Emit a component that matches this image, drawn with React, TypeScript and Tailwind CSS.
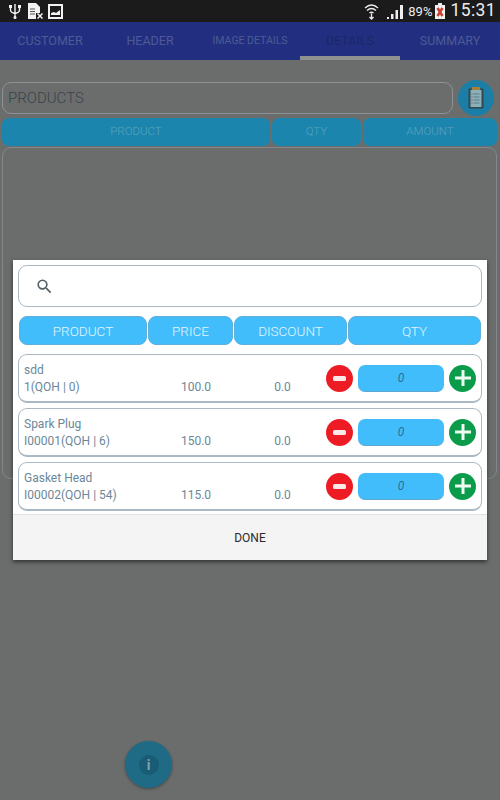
import { MdSearch } from 'react-icons/md'

const tabs = [
  { label: 'CUSTOMER', cls: 'text-[12.5px] text-[#4d5a96]' },
  { label: 'HEADER', cls: 'text-[12.5px] text-[#4d5a96]' },
  { label: 'IMAGE DETAILS', cls: 'text-[10.5px] text-[#4d5a96]' },
  { label: 'DETAILS', cls: 'text-[12.5px] text-[#1c2668] shadow-[inset_0_-4px_0_#8f9090]' },
  { label: 'SUMMARY', cls: 'text-[12.5px] text-[#4d5a96]' },
]

const products = [
  { name: 'sdd', code: '1(QOH | 0)', price: '100.0' },
  { name: 'Spark Plug', code: 'I00001(QOH | 6)', price: '150.0' },
  { name: 'Gasket Head', code: 'I00002(QOH | 54)', price: '115.0' },
]

function StatusBar() {
  return (
    <div className="h-[22px] bg-[#1b1b1b] flex items-center pl-[9px] pr-[4px] text-[#ececec]">
      <svg width="12" height="16" viewBox="0 0 12 16" fill="none" stroke="#f2f2f2" strokeWidth="1.4">
        <path d="M6 1v14M1.500 4v3q0 2.500 4.500 3.500q4.500-1 4.500-3.500V4" />
        <rect x="0" y="2" width="3" height="3" fill="#f2f2f2" stroke="none" />
        <rect x="9" y="2" width="3" height="3" fill="#f2f2f2" stroke="none" />
        <circle cx="6" cy="14.500" r="1.500" fill="#f2f2f2" stroke="none" />
      </svg>
      <svg className="ml-[7px]" width="15" height="16" viewBox="0 0 15 16">
        <path d="M0 0h8l4 4v6H8v6H0z" fill="#f2f2f2" />
        <path d="M2 6h5M2 8.500h5M2 11h5" stroke="#555" strokeWidth="1" />
        <path d="M9.500 10.500l5 5M14.500 10.500l-5 5" stroke="#f2f2f2" strokeWidth="1.500" />
      </svg>
      <svg className="ml-[5px]" width="15" height="15" viewBox="0 0 15 15">
        <rect x="1" y="1" width="13" height="13" fill="#1b1b1b" stroke="#f2f2f2" strokeWidth="2" />
        <path d="M3 11V9l3-1 2 1 4-3v5z" fill="#f2f2f2" />
      </svg>
      <svg className="ml-auto" width="15" height="17" viewBox="0 0 15 17" fill="none" stroke="#ededed" strokeWidth="1.300">
        <path d="M1 5q6.500-6 13 0M3 7.500q4.500-4 9 0M5.500 10q2-1.500 4 0" />
        <path d="M7.500 10.500v5.500M5.500 14l2 2 2-2" />
      </svg>
      <svg className="ml-[8px]" width="16" height="15" viewBox="0 0 16 15" fill="#ededed">
        <path d="M0 15h2v-2H0zM4 15h2.500V10H4zM8.500 15H11V6H8.500zM13 15h3V1h-3z" />
      </svg>
      <span className="ml-[5px] text-[13px] leading-none">89%</span>
      <svg className="ml-[3px]" width="10" height="16" viewBox="0 0 10 16">
        <rect x="3" y="0" width="4" height="2" fill="#ededed" />
        <rect x="0" y="2" width="10" height="14" fill="#f2f2f2" />
        <path d="M2.500 5l5 8M7.500 5l-5 8" stroke="#c8402f" strokeWidth="2.500" />
      </svg>
      <span className="ml-[5px] text-[17.5px] leading-none tracking-[0.4px]">15:31</span>
    </div>
  )
}

function RowButton({ color, children }: { color: string; children: React.ReactNode }) {
  return (
    <span className={`w-[27px] h-[27px] shrink-0 rounded-full flex items-center justify-center ${color}`}>{children}</span>
  )
}

function ProductRow({ name, code, price }: { name: string; code: string; price: string }) {
  return (
    <div className="h-[49px] bg-white border border-[#a9b8c2] border-b-2 rounded-[9px] flex items-center px-[5px] text-[12px] text-[#6b8799]">
      <div className="w-[129px] shrink-0 pt-[2px] whitespace-nowrap">
        <div className="leading-[17px] h-[17px]">{name}</div>
        <div className="leading-[17px] h-[17px]">{code}</div>
      </div>
      <div className="w-[86px] shrink-0 pt-[19px] text-center leading-[17px]">{price}</div>
      <div className="w-[87px] shrink-0 pt-[19px] text-center leading-[17px]">0.0</div>
      <div className="flex items-center">
        <RowButton color="bg-[#ed1c24]">
          <svg width="13" height="5" viewBox="0 0 13 5">
            <rect width="13" height="5" rx="1.500" fill="#fbe9e9" />
          </svg>
        </RowButton>
        <span className="ml-[5px] w-[86px] h-[27px] shrink-0 rounded-[7px] bg-[#42bdfb] border-b border-[#5fa8d0] flex items-center justify-center italic text-[12px] text-[#2b6f96]">
          0
        </span>
        <span className="ml-[5px]">
          <RowButton color="bg-[#0b9c4b]">
            <svg width="16" height="16" viewBox="0 0 16 16">
              <path d="M6.500 0h3v6.500H16v3H9.500V16h-3V9.500H0v-3h6.500z" fill="#eefaf2" />
            </svg>
          </RowButton>
        </span>
      </div>
    </div>
  )
}

export default function App() {
  return (
    <div className="relative w-[500px] h-[800px] overflow-hidden bg-[#6b6d6d] font-['Roboto',sans-serif]">
      <StatusBar />

      <div className="h-[38px] bg-[#222f80] grid grid-cols-5">
        {tabs.map((t) => (
          <div key={t.label} className={`flex items-center justify-center ${t.cls}`}>
            {t.label}
          </div>
        ))}
      </div>

      <div className="pl-[2px] pr-[3px] pt-[20px]">
        <div className="flex items-center">
          <div className="w-[451px] h-[32px] border border-[#8c9295] rounded-[9px] flex items-center pl-[5px] text-[15px] text-[#36434b] font-light">
            PRODUCTS
          </div>
          <div className="ml-[5px] w-[36px] h-[36px] rounded-full bg-[#1a7ea6] flex items-center justify-center">
            <svg width="16" height="22" viewBox="0 0 16 22">
              <rect x="0.500" y="1.500" width="15" height="20" rx="1" fill="#33474f" />
              <rect x="2.500" y="3" width="11" height="17" fill="#8cb0ba" />
              <rect x="4" y="0" width="8" height="3" fill="#a3803c" />
              <path d="M5.500 7h6M5.500 10h6M5.500 13h6M5.500 16h6" stroke="#5a7a84" strokeWidth="1" />
              <path d="M3.500 7h1M3.500 10h1M3.500 13h1M3.500 16h1" stroke="#8a4030" strokeWidth="1" />
            </svg>
          </div>
        </div>

        <div className="mt-[2px] flex gap-[2px] h-[28px] text-[11.5px] font-light text-[#5ba3bd]">
          <div className="w-[268px] rounded-[7px] bg-[#1c85ad] flex items-center justify-center">PRODUCT</div>
          <div className="w-[89px] rounded-[7px] bg-[#1c85ad] flex items-center justify-center">QTY</div>
          <div className="w-[134px] rounded-[7px] bg-[#1c85ad] flex items-center justify-center">AMOUNT</div>
        </div>

        <div className="mt-[1px] h-[332px] border border-[#82888b] rounded-[9px]" />
      </div>

      {/* product picker dialog */}
      <div className="absolute left-[13px] top-[260px] w-[474px] h-[300px] bg-white shadow-[0_2px_4px_rgba(0,0,0,0.55)] flex flex-col">
        <div className="mx-[5px] mt-[5px] h-[42px] border border-[#a9b8c2] rounded-[9px] flex items-center pl-[16px]">
          <MdSearch size={19} className="text-[#555f66]" />
        </div>

        <div className="mx-[6px] mt-[9px] flex gap-[1px] h-[29px] text-[13.5px] font-light text-[#e2f5fe]">
          <div className="w-[128px] rounded-[8px] bg-[#42bdfb] border border-[#5fb0da] flex items-center justify-center pt-[1px]">PRODUCT</div>
          <div className="w-[85px] rounded-[8px] bg-[#42bdfb] border border-[#5fb0da] flex items-center justify-center pt-[1px]">PRICE</div>
          <div className="w-[113px] rounded-[8px] bg-[#42bdfb] border border-[#5fb0da] flex items-center justify-center pt-[1px]">DISCOUNT</div>
          <div className="w-[133px] rounded-[8px] bg-[#42bdfb] border border-[#5fb0da] flex items-center justify-center pt-[1px]">QTY</div>
        </div>

        <div className="mx-[5px] mt-[9px] flex flex-col gap-[5px]">
          {products.map((p) => (
            <ProductRow key={p.name} {...p} />
          ))}
        </div>

        <div className="mt-[3px] flex-1 bg-[#f4f4f4] border-t border-[#dfe1e2] flex items-center justify-center text-[12px] text-[#2a2a2a]">
          DONE
        </div>
      </div>

      <div className="absolute left-[125px] top-[741px] w-[47px] h-[47px] rounded-full bg-[#1f6b86] shadow-[0_1px_3px_rgba(0,0,0,0.35)] flex items-center justify-center">
        <span className="w-[20px] h-[20px] rounded-full bg-[#185c75] flex items-center justify-center font-bold text-[14px] leading-none text-[#7fa3b2]">
          i
        </span>
      </div>
    </div>
  )
}
